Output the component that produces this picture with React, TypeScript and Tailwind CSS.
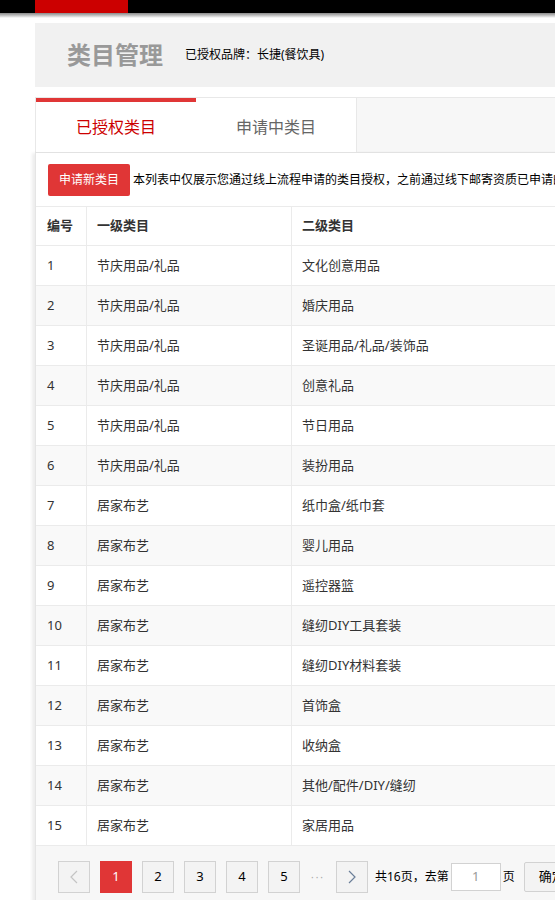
const rows: [string, string][] = [
  ["节庆用品/礼品", "文化创意用品"],
  ["节庆用品/礼品", "婚庆用品"],
  ["节庆用品/礼品", "圣诞用品/礼品/装饰品"],
  ["节庆用品/礼品", "创意礼品"],
  ["节庆用品/礼品", "节日用品"],
  ["节庆用品/礼品", "装扮用品"],
  ["居家布艺", "纸巾盒/纸巾套"],
  ["居家布艺", "婴儿用品"],
  ["居家布艺", "遥控器篮"],
  ["居家布艺", "缝纫DIY工具套装"],
  ["居家布艺", "缝纫DIY材料套装"],
  ["居家布艺", "首饰盒"],
  ["居家布艺", "收纳盒"],
  ["居家布艺", "其他/配件/DIY/缝纫"],
  ["居家布艺", "家居用品"],
];

function Chevron({ dir, color }: { dir: "left" | "right"; color: string }) {
  return (
    <svg width="8" height="14" viewBox="0 0 8 14" fill="none">
      <polyline
        points={dir === "left" ? "7,1 1,7 7,13" : "1,1 7,7 1,13"}
        stroke={color}
        strokeWidth="1.2"
      />
    </svg>
  );
}

export default function App() {
  return (
    <div className="w-full overflow-hidden bg-white font-['Noto_Sans','Noto_Sans_CJK_SC',sans-serif] text-[#333]">
      <div className="w-[1200px]">
        {/* top bar */}
        <div className="h-[13px] bg-black pl-[35px]">
          <div className="h-full w-[93px] bg-[#cc0000]" />
        </div>
        <div className="h-[5px] bg-gradient-to-b from-[#8a8a8a] to-white" />

        <div className="ml-[35px] mt-[5px]">
          {/* page header */}
          <div className="flex h-[64px] items-center bg-[#f1f1f1] pl-[32px]">
            <h1 className="text-[24px] font-bold leading-none text-[#999]">类目管理</h1>
            <span className="ml-[22px] text-[12px] leading-none text-black">已授权品牌：长捷(餐饮具)</span>
          </div>

          {/* tabs */}
          <div className="mt-[10px] flex h-[56px] border-y border-l border-[#e8e8e8] bg-[#f7f7f7]">
            <div className="flex w-[160px] items-center justify-center border-t-4 border-[#e03636] bg-white text-[16px] text-[#cc0000]">
              已授权类目
            </div>
            <div className="flex w-[161px] items-center justify-center border-r border-[#e8e8e8] bg-white pt-[4px] text-[16px] text-[#666]">
              申请中类目
            </div>
          </div>

          {/* panel */}
          <div className="border-l border-[#e5e5e5] bg-white shadow-[-3px_0_3px_rgba(0,0,0,0.07)]">
            <div className="flex items-center border-b border-[#ebebeb] pb-[10px] pl-[12px] pt-[11px]">
              <button className="h-[32px] rounded-[2px] bg-[#e03636] px-[11px] text-[12px] text-white">
                申请新类目
              </button>
              <span className="ml-[3px] whitespace-nowrap text-[12px] text-black">
                本列表中仅展示您通过线上流程申请的类目授权，之前通过线下邮寄资质已申请的类目授权请在商品发布页面查看。
              </span>
            </div>

            {/* table */}
            <div className="text-[13px]">
              <div className="flex h-[39px] items-center border-b border-[#ebebeb] font-bold">
                <div className="flex h-full w-[51px] items-center border-r border-[#ebebeb] pl-[11px]">编号</div>
                <div className="flex h-full w-[205px] items-center border-r border-[#ebebeb] pl-[10px]">一级类目</div>
                <div className="flex h-full flex-1 items-center pl-[10px]">二级类目</div>
              </div>
              {rows.map(([first, second], i) => (
                <div
                  key={i}
                  className={`flex h-[40px] items-center border-b border-[#ebebeb] ${i % 2 === 1 ? "bg-[#f9f9f9]" : "bg-white"}`}
                >
                  <div className="flex h-full w-[51px] items-center border-r border-[#ebebeb] pl-[11px]">{i + 1}</div>
                  <div className="flex h-full w-[205px] items-center border-r border-[#ebebeb] pl-[10px]">{first}</div>
                  <div className="flex h-full flex-1 items-center pl-[10px]">{second}</div>
                </div>
              ))}
            </div>

            {/* pagination */}
            <div className="flex h-[80px] items-start bg-[#f7f7f7] pl-[22px] pt-[15px] text-[13px]">
              <div className="flex items-center">
                <span className="flex h-8 w-8 items-center justify-center border border-[#d2d2d2] bg-[#f3f3f3]">
                  <Chevron dir="left" color="#c4c4c4" />
                </span>
                <span className="ml-[10px] flex h-8 w-8 items-center justify-center bg-[#e03636] text-white">1</span>
                {["2", "3", "4", "5"].map((p) => (
                  <span
                    key={p}
                    className="ml-[10px] flex h-8 w-8 items-center justify-center border border-[#d2d2d2] bg-[#f3f3f3] text-black"
                  >
                    {p}
                  </span>
                ))}
                <span className="flex w-[36px] justify-center text-[10px] tracking-[2px] text-[#aaa]">···</span>
                <span className="flex h-8 w-8 items-center justify-center border border-[#d2d2d2] bg-[#f3f3f3]">
                  <Chevron dir="right" color="#6b7f99" />
                </span>
                <span className="ml-[7px] text-[12px] text-black">共16页，去第</span>
                <span className="ml-[2px] flex h-[28px] w-[50px] items-center justify-center border border-[#d2d2d2] bg-white text-[#999]">
                  1
                </span>
                <span className="ml-[2px] text-[12px] text-black">页</span>
                <button className="ml-[9px] h-[30px] rounded-[2px] border border-[#d2d2d2] bg-[#f3f3f3] px-[14px] text-[13px] text-black">
                  确定
                </button>
              </div>
            </div>
          </div>
        </div>
      </div>
    </div>
  );
}
